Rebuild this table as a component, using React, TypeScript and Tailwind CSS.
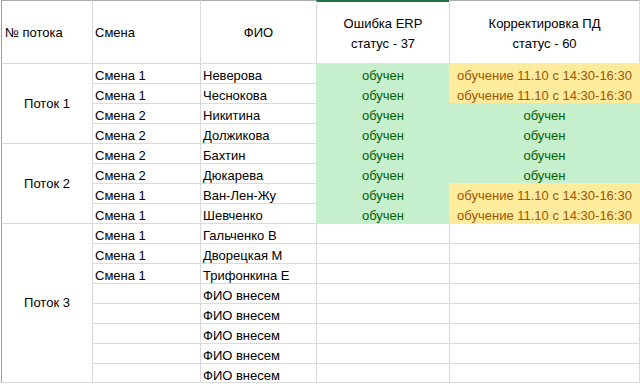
const GREEN_BG = 'bg-[#c6efce] text-[#006100]';
const YELLOW_BG = 'bg-[#ffeb9c] text-[#9c5700]';

type Fill = 'green' | 'yellow' | null;

type Row = {
    shift: string;
    name: string;
    erp: Fill;
    pd: Fill;
};

const rows: Row[] = [
    { shift: 'Смена 1', name: 'Неверова', erp: 'green', pd: 'yellow' },
    { shift: 'Смена 1', name: 'Чеснокова', erp: 'green', pd: 'yellow' },
    { shift: 'Смена 2', name: 'Никитина', erp: 'green', pd: 'green' },
    { shift: 'Смена 2', name: 'Должикова', erp: 'green', pd: 'green' },
    { shift: 'Смена 2', name: 'Бахтин', erp: 'green', pd: 'green' },
    { shift: 'Смена 2', name: 'Дюкарева', erp: 'green', pd: 'green' },
    { shift: 'Смена 1', name: 'Ван-Лен-Жу', erp: 'green', pd: 'yellow' },
    { shift: 'Смена 1', name: 'Шевченко', erp: 'green', pd: 'yellow' },
    { shift: 'Смена 1', name: 'Гальченко В', erp: null, pd: null },
    { shift: 'Смена 1', name: 'Дворецкая М', erp: null, pd: null },
    { shift: 'Смена 1', name: 'Трифонкина Е', erp: null, pd: null },
    { shift: '', name: 'ФИО внесем', erp: null, pd: null },
    { shift: '', name: 'ФИО внесем', erp: null, pd: null },
    { shift: '', name: 'ФИО внесем', erp: null, pd: null },
    { shift: '', name: 'ФИО внесем', erp: null, pd: null },
    { shift: '', name: 'ФИО внесем', erp: null, pd: null },
];

const streams = [
    { label: 'Поток 1', span: 'row-span-4' },
    { label: 'Поток 2', span: 'row-span-4' },
    { label: 'Поток 3', span: 'row-span-8' },
];

function fillText(fill: Fill) {
    if (fill === 'green') return 'обучен';
    if (fill === 'yellow') return 'обучение 11.10 с 14:30-16:30';
    return '';
}

function fillClasses(fill: Fill) {
    if (fill === 'green') return GREEN_BG;
    if (fill === 'yellow') return YELLOW_BG;
    return 'bg-white';
}

// excel fills paint over the gridlines around the cell
function topBorder(fill: Fill, above: Fill) {
    const c = fill ?? above;
    if (c === 'green') return 'border-t-[#c6efce]';
    if (c === 'yellow') return 'border-t-[#ffeb9c]';
    return 'border-t-[#dadada]';
}

function leftBorder(fill: Fill) {
    if (fill === 'green') return 'border-l-[#c6efce]';
    if (fill === 'yellow') return 'border-l-[#ffeb9c]';
    return 'border-l-[#dadada]';
}

function rightBorder(fill: Fill) {
    if (fill === 'green') return 'border-r-[#c6efce]';
    if (fill === 'yellow') return 'border-r-[#ffeb9c]';
    return 'border-r-[#dadada]';
}

export default function App() {
    return (
        <div className="h-[386px] w-[640px] overflow-hidden bg-white pl-px font-['Liberation_Sans',Arial,sans-serif] text-[13px] text-black">
            <div className="grid grid-cols-[91px_108px_116px_133px_191px] grid-rows-[63px_repeat(16,20px)]">
                <div className="flex items-center border-l border-t border-l-[#9e9e9e] border-t-[#ababab] pl-[3px] pt-[2px]">
                    № потока
                </div>
                <div className="flex items-center border-l border-t border-l-[#dadada] border-t-[#ababab] pl-[2px] pt-[2px]">
                    Смена
                </div>
                <div className="flex items-center justify-center border-l border-t border-l-[#dadada] border-t-[#ababab] pt-[2px]">
                    ФИО
                </div>
                <div className="flex flex-col items-center justify-center border-l border-t-2 border-l-[#dadada] border-t-[#217346] pt-[3px] text-center leading-[20px]">
                    <span>Ошибка ERP</span>
                    <span>статус - 37</span>
                </div>
                <div className="flex flex-col items-center justify-center border-l border-r border-t border-l-[#dadada] border-r-[#dadada] border-t-[#ababab] pt-[4px] text-center leading-[20px]">
                    <span>Корректировка ПД</span>
                    <span>статус - 60</span>
                </div>

                {rows.map((row, i) => {
                    const stream = streams.find((_, s) => [0, 4, 8][s] === i);
                    const prev = rows[i - 1];
                    const last = i === rows.length - 1 ? 'border-b border-b-[#dadada]' : '';
                    return [
                        stream && (
                            <div
                                key={`s${i}`}
                                className={`${stream.span} flex items-center justify-center border-l border-t border-l-[#9e9e9e] border-t-[#dadada] ${i === 8 ? 'border-b border-b-[#dadada]' : ''}`}
                            >
                                {stream.label}
                            </div>
                        ),
                        <div
                            key={`a${i}`}
                            className={`border-l border-t border-[#dadada] pl-[2px] pt-[2px] leading-[19px] ${last}`}
                        >
                            {row.shift}
                        </div>,
                        <div
                            key={`b${i}`}
                            className={`border-l border-t border-[#dadada] pl-[2px] pt-[2px] leading-[19px] ${last}`}
                        >
                            {row.name}
                        </div>,
                        <div
                            key={`c${i}`}
                            className={`border-l border-t pt-[2px] text-center leading-[19px] ${fillClasses(row.erp)} ${leftBorder(row.erp)} ${topBorder(row.erp, prev?.erp ?? null)} ${last}`}
                        >
                            {fillText(row.erp)}
                        </div>,
                        <div
                            key={`d${i}`}
                            className={`whitespace-nowrap border-l border-r border-t pt-[2px] text-center leading-[19px] ${fillClasses(row.pd)} ${leftBorder(row.pd)} ${rightBorder(row.pd)} ${topBorder(row.pd, prev?.pd ?? null)} ${last}`}
                        >
                            {fillText(row.pd)}
                        </div>,
                    ];
                })}
            </div>
        </div>
    );
}
